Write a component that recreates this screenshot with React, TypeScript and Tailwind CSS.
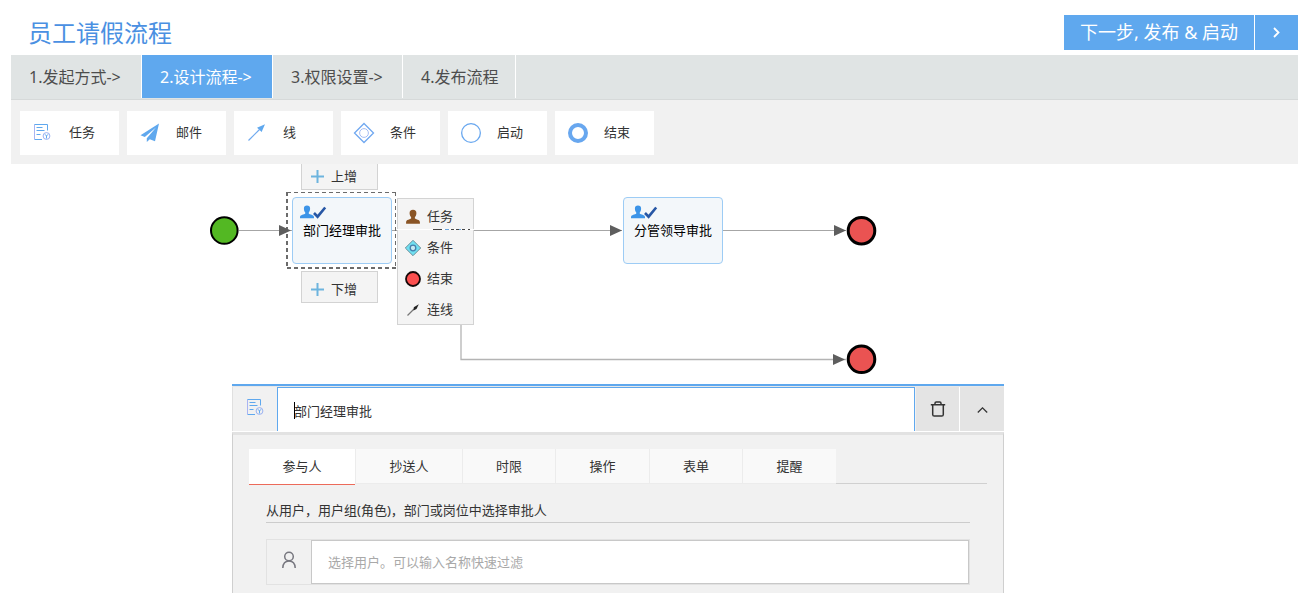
import type { ReactNode } from "react";

const FONT = "font-['Noto_Sans','Noto_Sans_CJK_SC',sans-serif]";

function TaskIcon() {
  return (
    <svg className="size-5" viewBox="0 0 20 20" fill="none" stroke="#5fa8ee">
      <path d="M9 16.500H1.500" />
      <path d="M1.500 16.500V1.500" stroke="#a9b4f2" />
      <path d="M1.500 1.500H14.500V7.500" />
      <path d="M3.500 4.500h6M3.500 7.500h8M3.500 11.500h4" />
      <circle cx="13.500" cy="13" r="3.400" stroke="#9ab2f2" />
      <path d="M12 11.300l1.500 1.700 1.500-1.700M13.500 13v2.500" />
    </svg>
  );
}

function MailIcon() {
  return (
    <svg className="size-5" viewBox="0 0 20 20" fill="#5fa8ee">
      <path d="M19 .5L.5 12.200l4.300 1.900L16 4.600 6.800 15.300V19l3-2.800 5.200 2z" />
    </svg>
  );
}

function LineIcon() {
  return (
    <svg className="size-5" viewBox="0 0 20 20" fill="#5fa8ee">
      <path d="M18 1.200L14.600 9l-2.200-2.200L10 4.800z" />
      <path d="M1.500 17.500L13 6" stroke="#6fa9ef" strokeWidth="1.200" />
    </svg>
  );
}

function ConditionIcon() {
  return (
    <svg className="size-5 overflow-visible" viewBox="0 0 20 20" fill="none">
      <path d="M10 .5L19.500 10 10 19.500.500 10z" stroke="#70a8f0" strokeWidth="1.300" />
      <circle cx="10" cy="10" r="4.400" stroke="#a5bdf3" />
    </svg>
  );
}

function RingIcon({ width }: { width: number }) {
  return (
    <svg className="size-5 overflow-visible" viewBox="0 0 20 20" fill="none">
      <circle cx="10" cy="10" r={10 - width / 2} stroke="#68a7ef" strokeWidth={width} />
    </svg>
  );
}

function PlusIcon() {
  return (
    <svg className="size-4" viewBox="0 0 16 16" stroke="#6db4de" strokeWidth="2">
      <path d="M7.500 1v13M1 7.500h13" />
    </svg>
  );
}

function BrownUserIcon() {
  return (
    <svg className="size-4" viewBox="0 0 16 16" fill="#8a5526">
      <path d="M8 .8c2.200 0 3.600 1.400 3.400 3.600-.2 1.900-.7 2.800-1.500 3.500v1.600c1 1 4.900 1 5 3.600v1.600H1.100v-1.600C1.200 10.500 5.100 10.500 6.100 9.500V7.900C5.300 7.200 4.800 6.300 4.600 4.400 4.400 2.200 5.800.8 8 .8z" />
    </svg>
  );
}

function GemIcon() {
  return (
    <svg className="size-4 overflow-visible" viewBox="0 0 16 16">
      <path d="M8 .3L15.700 8 8 15.700.300 8z" fill="#6fe0f2" stroke="#6c8f99" />
      <circle cx="8" cy="8" r="2.800" fill="#c5e9f2" stroke="#4480ac" strokeWidth="1.300" />
    </svg>
  );
}

function RedDotIcon() {
  return (
    <svg className="size-4" viewBox="0 0 16 16">
      <circle cx="8" cy="8" r="7" fill="#fb4f4f" stroke="#140808" strokeWidth="1.800" />
    </svg>
  );
}

function ConnectIcon() {
  return (
    <svg className="size-4" viewBox="0 0 16 16">
      <path d="M2.500 13.500L9 7" stroke="#777" strokeWidth="1.200" />
      <path d="M13.800 2.200L11.500 7 8.500 8.500 8.800 5.200z" fill="#222" />
    </svg>
  );
}

const steps = [
  { label: "1.发起方式->", active: false, width: "w-[131px]" },
  { label: "2.设计流程->", active: true, width: "w-[131px]" },
  { label: "3.权限设置->", active: false, width: "w-[130px]" },
  { label: "4.发布流程", active: false, width: "w-[113px]" },
];

const tools: { label: string; icon: ReactNode }[] = [
  { label: "任务", icon: <TaskIcon /> },
  { label: "邮件", icon: <MailIcon /> },
  { label: "线", icon: <LineIcon /> },
  { label: "条件", icon: <ConditionIcon /> },
  { label: "启动", icon: <RingIcon width={1.3} /> },
  { label: "结束", icon: <RingIcon width={4} /> },
];

const menuItems: { label: string; icon: ReactNode }[] = [
  { label: "任务", icon: <BrownUserIcon /> },
  { label: "条件", icon: <GemIcon /> },
  { label: "结束", icon: <RedDotIcon /> },
  { label: "连线", icon: <ConnectIcon /> },
];

const tabs = [
  { label: "参与人", width: "w-[106px]" },
  { label: "抄送人", width: "w-[107px]" },
  { label: "时限", width: "w-[93px]" },
  { label: "操作", width: "w-[94px]" },
  { label: "表单", width: "w-[93px]" },
  { label: "提醒", width: "w-[94px]" },
];

function TaskNode({ label, place }: { label: string; place: string }) {
  return (
    <div className={`absolute ${place} h-[67px] w-[100px] rounded border border-[#9dccf5] bg-[#f3f7fa] px-[7px] pt-[7px]`}>
      <svg className="h-[14px] w-[27px]" viewBox="0 0 27 14">
        <path
          d="M7 .5c2 0 3.200 1.200 3.100 3.200C10 5.500 9.500 6.500 8.800 7.200v1.500c1 .9 5 .8 5.200 3.300v1.300H0V12c.2-2.500 4.200-2.400 5.200-3.300V7.200C4.500 6.500 4 5.500 3.900 3.700 3.800 1.700 5 .5 7 .5z"
          fill="#3c94e8"
        />
        <path d="M14 8l3.600 3.700L25.200 2.500" fill="none" stroke="#2757a5" strokeWidth="2.600" />
      </svg>
      <div className="pl-[3px] text-[13px] leading-[22px] whitespace-nowrap text-black">{label}</div>
    </div>
  );
}

function InsertButton({ label, place }: { label: string; place: string }) {
  return (
    <button className={`absolute ${place} flex h-8 w-[77px] items-center gap-[5px] border border-[#d3d3d3] bg-[#f4f4f4] pt-[6px] pl-2 text-[13px]`}>
      <PlusIcon />
      {label}
    </button>
  );
}

function Canvas() {
  return (
    <main className="relative h-[220px] overflow-hidden">
      <svg className="absolute top-0 left-0" width="900" height="220" viewBox="11 164 900 220" fill="none">
        <g stroke="#a6a6a6">
          <path d="M239 230.500H292M392 230.500H622M723 230.500H846" />
          <path d="M461 320V359.500H846" stroke="#b4b4b4" strokeWidth="1.300" />
        </g>
        <g stroke="#6b6b6b" strokeDasharray="4 3">
          <path d="M287 192.500H396M395.500 192V269" />
          <path d="M287 268H396M287 192V269" strokeWidth="2" />
        </g>
        <g fill="#5e5e5e">
          <path d="M279 225l12 5.500-12 5.500zM610 225l12 5.500-12 5.500zM834 225l12 5.500-12 5.500zM833 354l12 5.500-12 5.500z" />
        </g>
        <circle cx="224.300" cy="230.500" r="13.300" fill="#53b823" stroke="#000" strokeWidth="2" />
        <circle cx="861.500" cy="230.700" r="13.300" fill="#ea5352" stroke="#000" strokeWidth="3" />
        <circle cx="861.500" cy="359.300" r="13.300" fill="#ea5352" stroke="#000" strokeWidth="3" />
      </svg>
      <TaskNode label="部门经理审批" place="left-[281px] top-[33px]" />
      <TaskNode label="分管领导审批" place="left-[612px] top-[33px]" />
      <InsertButton label="上增" place="left-[290px] top-[-6px]" />
      <InsertButton label="下增" place="left-[290px] top-[107px]" />
      <ul className="absolute top-[34px] left-[386px] h-[127px] w-[77px] border border-[#d3d3d3] bg-[#f4f4f4] pt-[2px]">
        {menuItems.map((item) => (
          <li key={item.label}>
            <button className="flex h-[31px] w-full items-center gap-[6px] pl-[7px] text-[13px]">
              {item.icon}
              {item.label}
            </button>
          </li>
        ))}
      </ul>
      <svg className="absolute top-[65px] left-[386px]" width="78" height="2" viewBox="0 0 78 2">
        <path d="M0 .5H78" stroke="#fff" />
        <path d="M36 .5h9M54 .5h3M59 .5h3M65 .5h3M71 .5h2" stroke="#444" />
        <path d="M48 .5h4M62 .5h2" stroke="#6aa5dd" />
      </svg>
    </main>
  );
}

function Panel() {
  return (
    <section className="ml-[221px] flex w-3/5 flex-1 flex-col border-t-2 border-[#5fa8ee] bg-[#f1f1f1]">
      <div className="flex h-[46px] border-t border-b border-t-[#e8e8e8] border-b-white">
        <label htmlFor="task-name" aria-label="任务" className="flex w-[45px] items-center border-l border-[#e0e0e0] pb-[2px] pl-[13px]">
          <TaskIcon />
        </label>
        <div className="relative flex flex-1">
          <input
            id="task-name"
            defaultValue="部门经理审批"
            className="min-w-0 flex-1 border border-b-0 border-[#5fa8ee] bg-white pt-1 pl-4 text-[13px] outline-none"
          />
          <span className="absolute top-[15px] left-[17px] h-[17px] w-px bg-black" />
        </div>
        <button aria-label="删除" className="ml-px flex w-11 items-center justify-center border-r border-white bg-[#e4e4e4]">
          <svg className="size-4" viewBox="0 0 16 16" fill="none" stroke="#333" strokeWidth="1.500">
            <path d="M.8 3.800h14.400M5 3.500V2.300c0-.8.5-1.300 1.300-1.300h3.400c.8 0 1.300.5 1.300 1.300v1.200M2.700 4v9.500c0 1 .6 1.600 1.600 1.600h7.400c1 0 1.600-.6 1.600-1.600V4" />
          </svg>
        </button>
        <button aria-label="收起" className="flex w-11 items-center justify-center bg-[#e4e4e4] pt-[2px]">
          <svg className="h-[6px] w-[11px]" viewBox="0 0 11 6" fill="none" stroke="#333" strokeWidth="1.300">
            <path d="M.8 5.500L5.500.9l4.700 4.600" />
          </svg>
        </button>
      </div>
      <div className="flex-1 border-x border-t-[3px] border-x-[#cfcfcf] border-t-[#e2e2e2] px-4 pt-[14px]">
        <div role="tablist" className="flex h-[36px]">
          {tabs.map((tab, i) => (
            <button
              key={tab.label}
              role="tab"
              aria-selected={i === 0}
              className={`${tab.width} text-[13px] ${
                i === 0 ? "border-b border-[#ec6a5a] bg-white" : "mb-px border-b border-l border-[#ececec] bg-[#f9f9f9] pt-[2px]"
              }`}
            >
              {tab.label}
            </button>
          ))}
          <div className="mb-px flex-1 border-b border-[#d0d0d0]" />
        </div>
        <div className="px-[17px]">
          <h2 className="mt-[13px] border-b border-[#cccccc] text-[13px] leading-6">
            从用户，用户组(角色)，部门或岗位中选择审批人
          </h2>
          <div className="mt-4 flex h-[46px] border border-[#e2e2e2]">
            <label htmlFor="user-filter" aria-label="用户" className="flex w-11 items-center justify-center pb-1">
              <svg className="h-[18px] w-[14px]" viewBox="0 0 14 18" fill="none" stroke="#77777f" strokeWidth="1.500">
                <circle cx="7" cy="5.500" r="4.300" />
                <path d="M.8 17c.2-4.600 2.300-7 6.200-7s6 2.400 6.200 7" />
              </svg>
            </label>
            <input
              id="user-filter"
              placeholder="选择用户。可以输入名称快速过滤"
              className="min-w-0 flex-1 border border-[#c8c8c8] bg-white pt-[2px] pl-4 text-[13px] outline-none placeholder:text-[#a9a9a9]"
            />
          </div>
        </div>
      </div>
    </section>
  );
}

export default function App() {
  return (
    <div className={`${FONT} flex min-h-screen flex-col bg-white pr-[13px] pl-[11px] text-[#333]`}>
      <header className="flex h-[55px] items-start justify-between pt-[15px] pl-[17px]">
        <h1 className="text-2xl leading-9 text-[#4a90e2]">员工请假流程</h1>
        <div className="flex h-[35px] gap-px text-white">
          <button className="bg-[#5fa8ee] px-4 text-lg leading-[35px]">下一步, 发布 &amp; 启动</button>
          <button aria-label="下一步" className="flex w-[43px] items-center justify-center bg-[#5fa8ee]">
            <svg className="h-[11px] w-[7px]" viewBox="0 0 7 11" fill="none" stroke="#fff" strokeWidth="1.800">
              <path d="M1 1l4.500 4.500L1 10" />
            </svg>
          </button>
        </div>
      </header>
      <nav className="flex h-[45px] border-b border-[#d6d9d9] bg-[#e0e4e4] pb-px">
        {steps.map((step) => (
          <a
            key={step.label}
            href="#"
            className={`${step.width} flex items-center border-r border-white pl-[18px] text-base ${
              step.active ? "bg-[#5fa8ee] text-white" : "text-[#4d4d4d]"
            }`}
          >
            {step.label}
          </a>
        ))}
      </nav>
      <div className="flex h-16 gap-2 bg-[#f1f1f1] pt-[11px] pl-[9px]">
        {tools.map((tool) => (
          <button key={tool.label} className="flex h-11 w-[99px] items-center gap-4 bg-white pl-[13px] text-[13px]">
            {tool.icon}
            {tool.label}
          </button>
        ))}
      </div>
      <Canvas />
      <Panel />
    </div>
  );
}
